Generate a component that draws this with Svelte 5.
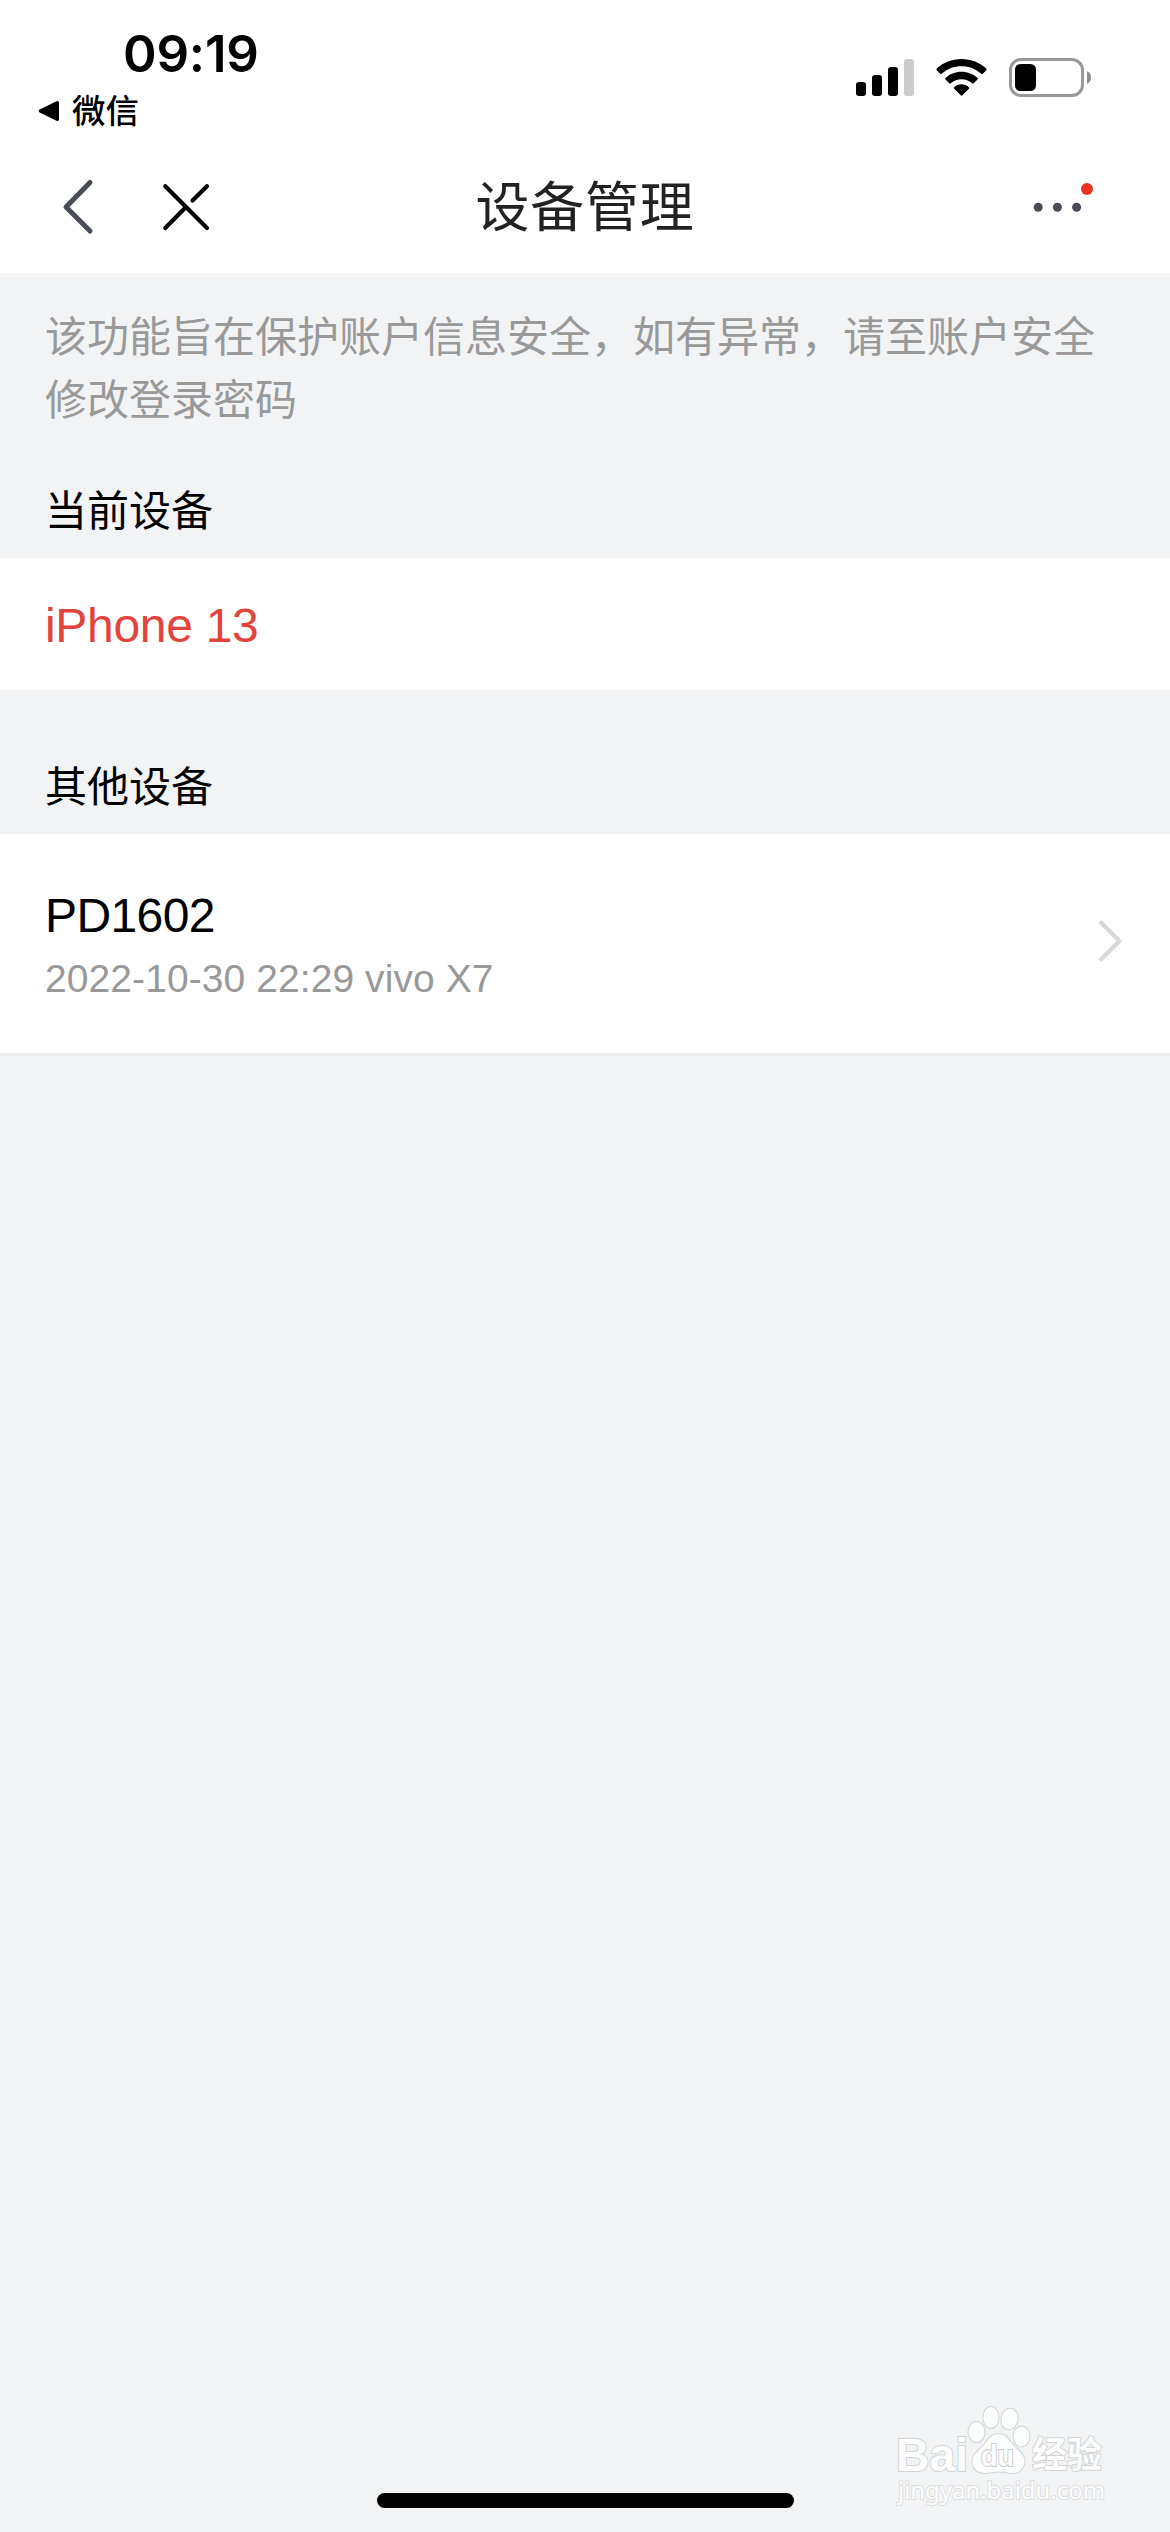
<script>
	const time = '09:19';
	const currentDevice = 'iPhone 13';

	const otherDevices = [
		{ name: 'PD1602', info: '2022-10-30 22:29 vivo X7' }
	];
</script>

<div class="page">
	<header>
		<div class="status-bar">
			<div class="status-left">
				<div class="time">{time}</div>
				<div class="return-app">
					<svg width="22" height="22" viewBox="0 0 22 22">
						<path d="M2.2 9.2 L18.5 1.2 Q21 0.4 21 3 V19 Q21 21.6 18.5 20.8 L2.2 12.8 Q-1 11 2.2 9.2Z" />
					</svg>
					<span>微信</span>
				</div>
			</div>

			<div class="status-icons">
				<svg class="signal" width="58" height="37" viewBox="0 0 58 37">
					<rect x="0" y="23" width="10" height="14" rx="3" />
					<rect x="16" y="16" width="10" height="21" rx="3" />
					<rect x="32" y="8" width="10" height="29" rx="3" />
					<rect x="48" y="0" width="10" height="37" rx="3" fill="#ccc" />
				</svg>
				<svg class="wifi" width="51" height="37" viewBox="0 0 51 37">
					<path d="M25.5 0 C35 0 44 3.5 50.3 9.6 Q51 10.4 50.3 11.2 L46.8 14.7 Q46 15.4 45.2 14.7 C39.5 9.8 33 7.3 25.5 7.3 C18 7.3 11.5 9.8 5.8 14.7 Q5 15.4 4.2 14.7 L0.7 11.2 Q0 10.4 0.7 9.6 C7 3.5 16 0 25.5 0Z" />
					<path d="M25.5 12.7 C31.7 12.7 37.3 15 41.5 18.9 Q42.3 19.7 41.5 20.5 L37.7 24.2 Q36.9 25 36.1 24.2 C33 21.5 29.5 20.2 25.5 20.2 C21.5 20.2 18 21.5 14.9 24.2 Q14.1 25 13.3 24.2 L9.5 20.5 Q8.7 19.7 9.5 18.9 C13.7 15 19.3 12.7 25.5 12.7Z" />
					<path d="M25.5 25.3 C28.4 25.3 31 26.4 32.9 28.2 Q33.6 29 32.9 29.7 L26.3 36.3 Q25.5 37 24.7 36.3 L18.1 29.7 Q17.4 29 18.1 28.2 C20 26.4 22.6 25.3 25.5 25.3Z" />
				</svg>
				<svg class="battery" width="82" height="39" viewBox="0 0 82 39">
					<rect x="1.5" y="1.5" width="72" height="36" rx="10.5" fill="none" stroke="#999" stroke-width="3" />
					<rect x="6" y="6" width="21" height="27" rx="5.5" />
					<path d="M78 13 Q82 15.2 82 19.5 Q82 23.8 78 26Z" fill="#8c8c8c" />
				</svg>
			</div>
		</div>

		<nav>
			<div class="nav-side">
				<svg class="back" width="32" height="58" viewBox="0 0 32 58">
					<path d="M28 4.5 L4 29 L28 53" fill="none" stroke="#484c56" stroke-width="5" stroke-linecap="round" stroke-linejoin="round" />
				</svg>
				<svg class="close" width="48" height="48" viewBox="0 0 48 48">
					<path d="M3.3 3.3 L45 45 M45 3.3 L30.5 17.5 M24 24 L3.3 45" fill="none" stroke="#000" stroke-width="4.2" stroke-linecap="round" />
				</svg>
			</div>
			<h1>设备管理</h1>
			<div class="nav-side right">
				<svg width="61" height="36" viewBox="0 0 61 36">
					<g fill="#484c56">
						<circle cx="5.2" cy="24.3" r="4.5" />
						<circle cx="24.4" cy="24.3" r="4.5" />
						<circle cx="43.6" cy="24.3" r="4.5" />
					</g>
					<circle cx="54" cy="6" r="6" fill="#eb3323" />
				</svg>
			</div>
		</nav>
	</header>

	<main>
		<p class="tip">该功能旨在保护账户信息安全，如有异常，请至账户安全修改登录密码</p>

		<h2>当前设备</h2>
		<div class="current">{currentDevice}</div>

		<h2 class="other-title">其他设备</h2>
		{#each otherDevices as device}
			<div class="device">
				<div class="device-text">
					<div class="device-name">{device.name}</div>
					<div class="device-info">{device.info}</div>
				</div>
				<svg class="arrow" width="26" height="44" viewBox="0 0 26 44">
					<path d="M3 2.5 L22.5 22 L3 41.5" fill="none" stroke="#d8d8d8" stroke-width="4.2" />
				</svg>
			</div>
		{/each}
	</main>

	<svg class="watermark" width="230" height="120" viewBox="0 0 230 120">
		<g class="mark">
			<text class="brand" x="6" y="71" textLength="72" lengthAdjust="spacingAndGlyphs">Bai</text>
			<ellipse cx="86.5" cy="32" rx="8" ry="10" />
			<ellipse cx="101" cy="17.5" rx="7.6" ry="10.5" />
			<ellipse cx="119.5" cy="19" rx="8" ry="10.3" transform="rotate(10 119.5 19)" />
			<ellipse cx="131.5" cy="36.5" rx="8" ry="10" />
			<path d="M108.5 34 C116 34 119 40 123 45 C129 51 135 55 134.5 62 C134 70 128 73.5 121 73 C116 72.5 113 71.5 108.5 71.5 C104 71.5 100 73 95 73 C87 73 82.5 68 82.5 61.500 C82.5 54 89 51 94 45 C98 40 101 34 108.5 34Z" />
			<text class="du" x="91" y="66" textLength="33" lengthAdjust="spacingAndGlyphs">du</text>
			<text class="cn" x="142" y="68" textLength="70" lengthAdjust="spacingAndGlyphs">经验</text>
			<text class="url" x="8" y="99" textLength="207" lengthAdjust="spacingAndGlyphs">jingyan.baidu.com</text>
		</g>
	</svg>

	<footer>
		<div class="home-bar"></div>
	</footer>
</div>

<style>
	:global(body) {
		margin: 0;
		background: #f2f3f5;
	}

	.page {
		position: relative;
		display: flex;
		flex-direction: column;
		width: 1170px;
		height: 2532px;
		overflow: hidden;
		background: #f2f3f5;
		font-family: "Liberation Sans", "Noto Sans CJK SC", sans-serif;
		color: #000;
	}

	svg {
		display: block;
		flex: none;
	}

	header {
		height: 273px;
		background: #fff;
	}

	.status-bar {
		display: flex;
		justify-content: space-between;
		height: 141px;
		box-sizing: border-box;
		padding: 23px 79px 0 38px;
	}

	.time {
		padding-left: 85px;
		font-family: Inter, sans-serif;
		font-size: 51px;
		font-weight: 600;
		line-height: 62px;
		letter-spacing: -0.2px;
	}

	.return-app {
		display: flex;
		align-items: center;
		gap: 12px;
		height: 52px;
		font-size: 33.5px;
		font-weight: 500;
		line-height: 52px;
	}

	.return-app span {
		padding-top: 2px;
	}

	.status-icons {
		display: flex;
		align-items: center;
		height: 39px;
		padding-top: 35px;
	}

	.wifi {
		margin: 0 22px;
	}

	nav {
		display: flex;
		align-items: center;
		justify-content: space-between;
		height: 132px;
		padding: 0 76px 0 62px;
	}

	.nav-side {
		display: flex;
		align-items: center;
		gap: 68px;
		width: 300px;
	}

	.nav-side.right {
		justify-content: flex-end;
		width: 286px;
		padding-bottom: 12px;
	}

	h1 {
		margin: 0;
		padding-top: 2px;
		font-size: 54px;
		font-weight: 400;
		line-height: 80px;
		letter-spacing: 0.8px;
		color: #222;
	}

	.tip {
		height: 125px;
		margin: 0;
		padding: 33px 45px 0;
		font-size: 42px;
		line-height: 63px;
		color: #999;
	}

	h2 {
		height: 63px;
		margin: 0;
		padding: 49px 45px 15px;
		font-size: 42px;
		font-weight: 400;
		line-height: 63px;
	}

	.current {
		height: 132px;
		padding: 0 45px;
		background: #fff;
		color: #e1443c;
		font-size: 48px;
		line-height: 135px;
		letter-spacing: -0.3px;
	}

	.other-title {
		padding-top: 66px;
	}

	.device {
		display: flex;
		align-items: center;
		justify-content: space-between;
		height: 219px;
		padding: 0 47px 0 45px;
		background: #fff;
		border-bottom: 3px solid #ededed;
	}

	.device-text {
		padding-top: 5px;
	}

	.device-name {
		font-size: 48px;
		line-height: 66px;
		letter-spacing: -0.6px;
	}

	.device-info {
		font-size: 39px;
		line-height: 60px;
		letter-spacing: 0.08px;
		color: #999;
	}

	.arrow {
		margin-bottom: 5px;
	}

	.watermark {
		position: absolute;
		left: 890px;
		top: 2400px;
	}

	.mark {
		fill: #fcfdfd;
		stroke: #d3d4d5;
		stroke-width: 2px;
		paint-order: stroke;
	}

	.brand {
		font-size: 47px;
		font-weight: 700;
	}

	.du {
		font-size: 30px;
		font-weight: 700;
		stroke: #cbcccd;
	}

	.cn {
		font-size: 36px;
		font-weight: 700;
	}

	.url {
		font-family: "Noto Sans", sans-serif;
		font-size: 24px;
		stroke: #dcddde;
	}

	footer {
		display: flex;
		justify-content: center;
		margin-top: auto;
		padding-bottom: 24px;
	}

	.home-bar {
		width: 417px;
		height: 15px;
		border-radius: 8px;
		background: #000;
	}
</style>
